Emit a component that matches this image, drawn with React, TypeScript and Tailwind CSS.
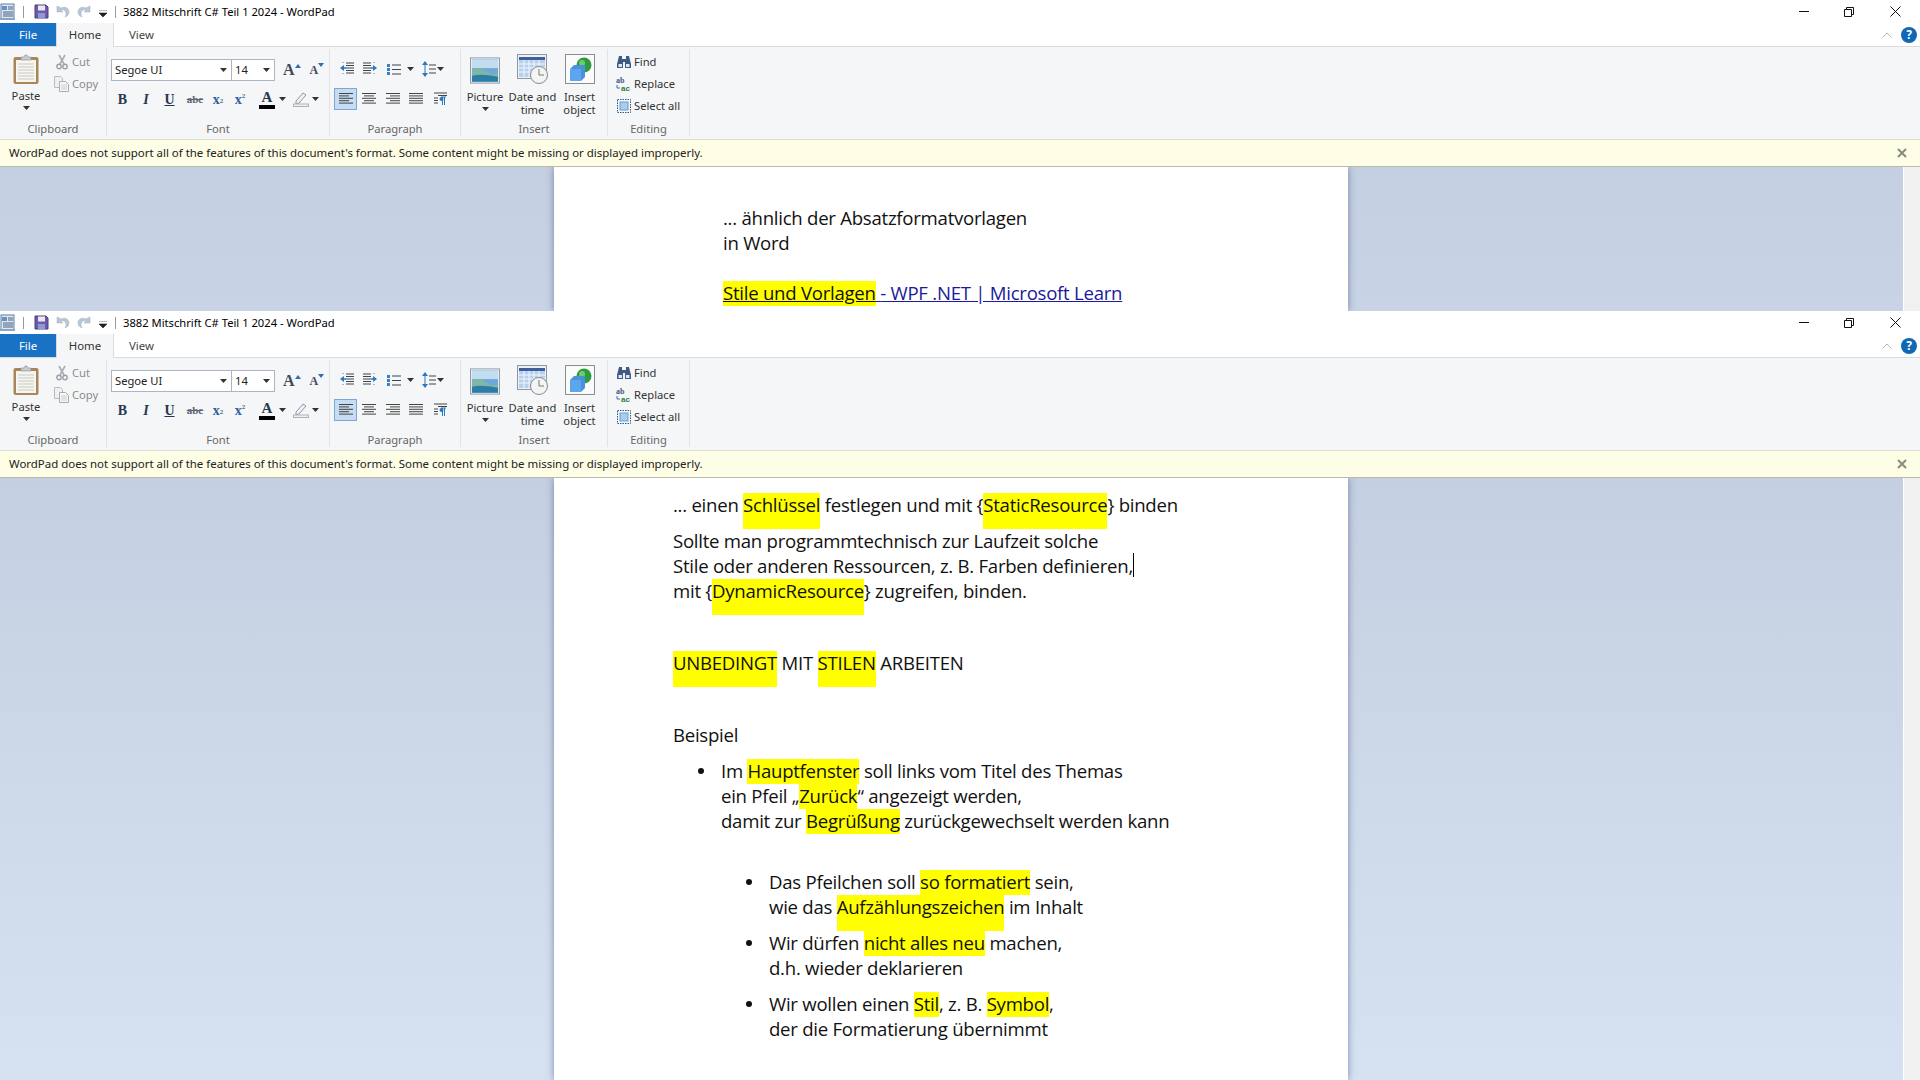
import type { ReactNode } from "react";

const ui = "font-['Noto_Sans','Open_Sans',sans-serif]";

function Arrow({ className = "" }: { className?: string }) {
  return (
    <svg width="7" height="4" viewBox="0 0 7 4" className={className}>
      <path d="M0 0h7L3.5 4z" fill="#333" />
    </svg>
  );
}

function Lines({ rows, color = "#444" }: { rows: [number, number][]; color?: string }) {
  return (
    <svg width="16" height="14" viewBox="0 0 16 14">
      {rows.map(([x, w], i) => (
        <rect key={i} x={x} y={1 + i * 2.4} width={w} height="1" fill={color} />
      ))}
    </svg>
  );
}

function AppIcon() {
  return (
    <svg width="16" height="18" viewBox="0 0 16 18">
      <rect x="1" y="1" width="13" height="15" fill="#dce8f5" stroke="#5f7f9f" />
      <rect x="2" y="3" width="5" height="4" fill="#6b8fc2" />
      <path d="M8 4h5M8 6h5M3 9h10M3 11h10M3 13h10" stroke="#47607c" />
      <rect x="0" y="15" width="15" height="2" fill="#8aa5c0" />
    </svg>
  );
}

function SaveIcon() {
  return (
    <svg width="15" height="15" viewBox="0 0 15 15">
      <path d="M1 1h11l2 2v11H1z" fill="#6e5aa8" stroke="#4a3d7c" />
      <rect x="4" y="1.5" width="7" height="5" fill="#e6e9f2" />
      <rect x="4" y="9" width="7" height="5" fill="#8b9ad0" />
    </svg>
  );
}

function UndoIcon({ flip }: { flip?: boolean }) {
  return (
    <svg width="14" height="14" viewBox="0 0 14 14" className={flip ? "-scale-x-100" : ""}>
      <path d="M1 1v6h6L5 5c3-1 5 1 5 4 0 1-.5 2-1 3 3-1 4-3 4-5 0-4-4-6-8-4z" fill="#b9c6d6" stroke="#a3b1c2" strokeWidth=".5" />
    </svg>
  );
}

function TitleBar({ title }: { title: string }) {
  return (
    <div className="flex h-[23px] items-center bg-white">
      <div className="flex w-[21px]">
        <AppIcon />
      </div>
      <div className="mx-0.5 h-[12px] w-px bg-[#999]" />
      <div className="ml-[8px] flex items-center gap-[7px]">
        <SaveIcon />
        <UndoIcon />
        <UndoIcon flip />
      </div>
      <svg width="8" height="7" viewBox="0 0 8 7" className="ml-[8px] mt-[3px]">
        <path d="M0 0h8M0 3h8L4 7z" fill="#222" stroke="#222" strokeWidth=".6" />
      </svg>
      <div className="ml-[8px] h-[12px] w-px bg-[#999]" />
      <span className={`ml-[7px] text-[11.2px] leading-none text-black ${ui}`}>{title}</span>
      <div className="ml-auto flex items-center">
        <svg width="10" height="2" viewBox="0 0 10 2" className="mr-[35px]">
          <rect width="10" height="1" fill="#111" />
        </svg>
        <svg width="10" height="10" viewBox="0 0 10 10" className="mr-[36px]">
          <path d="M.5 2.5h7v7h-7zM2.5 2.5v-2h7v7h-2" fill="none" stroke="#111" />
        </svg>
        <svg width="11" height="11" viewBox="0 0 11 11" className="mr-[19px]">
          <path d="M.5.5l10 10M10.5.5l-10 10" stroke="#111" />
        </svg>
      </div>
    </div>
  );
}

function TabBar() {
  return (
    <div className={`flex h-[24px] items-stretch border-b border-[#dadbdc] bg-white text-[11.4px] ${ui}`}>
      <div className="flex w-[56px] items-center justify-center bg-[#1a72c4] text-white">File</div>
      <div className="z-10 -mb-px flex w-[58px] items-center justify-center border-x border-[#dadbdc] bg-[#f5f6f7] text-[#333]">
        Home
      </div>
      <div className="ml-[15px] flex items-center text-[#444]">View</div>
      <div className="ml-auto flex items-center">
        <svg width="10" height="6" viewBox="0 0 10 6" className="mr-[9px]">
          <path d="M.5 5.5L5 1l4.5 4.5" fill="none" stroke="#b9b3ae" />
        </svg>
        <div className="mr-[3px] flex size-[16px] items-center justify-center rounded-full bg-[#0f67b5] text-[12px] leading-none font-bold text-white">
          ?
        </div>
      </div>
    </div>
  );
}

function Group({ label, width, children }: { label: string; width: string; children: ReactNode }) {
  return (
    <div className={`flex h-[87px] flex-col border-r border-[#e1e3e6] ${width}`}>
      <div className="min-h-0 flex-1">{children}</div>
      <div className="h-[14px] text-center text-[11.2px] leading-[13px] text-[#666]">{label}</div>
    </div>
  );
}

function SmallCommand({ icon, label, muted }: { icon: ReactNode; label: string; muted?: boolean }) {
  return (
    <div className={`flex h-[22px] items-center ${muted ? "text-[#8c8c8c]" : "text-[#333]"}`}>
      <span className="flex w-[19px] justify-center">{icon}</span>
      <span className="ml-[1px]">{label}</span>
    </div>
  );
}

function Clipboard() {
  return (
    <Group label="Clipboard" width="w-[107px]">
      <div className="flex">
        <div className="flex w-[52px] flex-col items-center pt-[5px]">
          <svg width="26" height="30" viewBox="0 0 26 30">
            <rect x=".5" y="3" width="25" height="27" rx="2" fill="#a9865a" />
            <rect x="3" y="6" width="20" height="22" fill="#f6f5ef" />
            <path d="M5 10h16M5 13h16M5 16h16M5 19h16M5 22h16M5 25h16" stroke="#c9c9c4" />
            <path d="M8 6V3h3l1-2h2l1 2h3v3z" fill="#c7c9cc" stroke="#8c8f93" strokeWidth=".6" />
          </svg>
          <span className="mt-[5px] leading-[14px] text-[#333]">Paste</span>
          <Arrow className="mt-[3px]" />
        </div>
        <div className="pt-[2px]">
          <SmallCommand
            muted
            label="Cut"
            icon={
              <svg width="12" height="16" viewBox="0 0 12 16">
                <path d="M3 1l5 9M9 1L4 10" stroke="#a9adb3" strokeWidth="1.6" />
                <circle cx="3" cy="12.5" r="2.2" fill="none" stroke="#9ba0a8" strokeWidth="1.4" />
                <circle cx="9" cy="12.5" r="2.2" fill="none" stroke="#9ba0a8" strokeWidth="1.4" />
              </svg>
            }
          />
          <SmallCommand
            muted
            label="Copy"
            icon={
              <svg width="15" height="16" viewBox="0 0 15 16">
                <path d="M.5.5h6l2 2v9H.5z" fill="#eef0f2" stroke="#b8bcc2" />
                <path d="M5.5 5.5h6l3 3v7h-9z" fill="#f8f8f8" stroke="#a8adb4" />
                <path d="M7 9h6M7 11h6M7 13h6" stroke="#c8ccd1" />
              </svg>
            }
          />
        </div>
      </div>
    </Group>
  );
}

function FormatButton({ children, className }: { children: ReactNode; className: string }) {
  return <span className={`flex h-[22px] items-center justify-center font-['Liberation_Serif',serif] ${className}`}>{children}</span>;
}

function Font() {
  return (
    <Group label="Font" width="w-[223px]">
      <div className="pt-[10px] pl-[4px]">
        <div className="flex h-[22px] items-center">
          <div className="flex h-full w-[121px] items-center justify-between border border-[#abb5c3] bg-white pr-[4px] pl-[3px] text-[#222]">
            Segoe UI
            <Arrow />
          </div>
          <div className="-ml-px flex h-full w-[44px] items-center justify-between border border-[#abb5c3] bg-white pr-[4px] pl-[3px] text-[#222]">
            14
            <Arrow />
          </div>
          <span className="ml-[8px] font-['Liberation_Serif',serif] text-[16px] leading-none font-bold text-[#3d4a5c]">A</span>
          <svg width="6" height="4" viewBox="0 0 6 4" className="mb-[9px]">
            <path d="M0 4h6L3 0z" fill="#2d6fb0" />
          </svg>
          <span className="ml-[9px] font-['Liberation_Serif',serif] text-[12px] leading-none font-bold text-[#3d4a5c]">A</span>
          <svg width="6" height="4" viewBox="0 0 6 4" className="mb-[11px]">
            <path d="M0 0h6L3 4z" fill="#2d6fb0" />
          </svg>
        </div>
        <div className="mt-[7px] flex h-[22px] items-center">
          <FormatButton className="ml-[6px] w-[11px] text-[14px] font-bold text-[#27384e]">B</FormatButton>
          <FormatButton className="ml-[13px] w-[10px] text-[14px] font-bold text-[#27384e] italic">I</FormatButton>
          <FormatButton className="ml-[13px] w-[11px] text-[14px] font-bold text-[#27384e] underline">U</FormatButton>
          <FormatButton className="ml-[11px] w-[18px] text-[11px] font-bold text-[#5b6675] line-through">abc</FormatButton>
          <FormatButton className="ml-[7px] w-[14px] text-[14px] font-bold text-[#2e5f9e]">
            x<sub className="text-[7px] text-[#666]">2</sub>
          </FormatButton>
          <FormatButton className="ml-[8px] w-[14px] text-[14px] font-bold text-[#2e5f9e]">
            x<sup className="text-[7px] text-[#666]">2</sup>
          </FormatButton>
          <div className="ml-[12px] flex w-[16px] flex-col items-center">
            <span className="font-['Liberation_Serif',serif] text-[15px] leading-[14px] font-bold text-[#27384e]">A</span>
            <div className="mt-[1px] h-[4px] w-[16px] bg-black" />
          </div>
          <Arrow className="ml-[4px]" />
          <svg width="16" height="16" viewBox="0 0 16 16" className="ml-[7px]">
            <path d="M3 10l7-8 3 2-7 8-3 1z" fill="#eef2f6" stroke="#8d98a6" />
            <rect x=".5" y="13" width="15" height="2.5" fill="#eef0f0" stroke="#adb3b8" />
          </svg>
          <Arrow className="ml-[3px]" />
        </div>
      </div>
    </Group>
  );
}

function IndentIcon({ flip }: { flip?: boolean }) {
  return (
    <svg width="16" height="14" viewBox="0 0 16 14" className={flip ? "-scale-x-100" : ""}>
      <path d="M7 1h8M7 3.5h8M7 6h8M7 8.5h8M7 11h8" stroke="#3c4550" />
      <path d="M1 6l4-3v6z" fill="#2a77c0" />
      <path d="M4 6h3" stroke="#2a77c0" strokeWidth="1.5" />
      <path d="M4 0v1M4 11v1" stroke="#777" strokeDasharray="1 1" />
    </svg>
  );
}

function Paragraph() {
  return (
    <Group label="Paragraph" width="w-[131px]">
      <div className="flex h-[40px] items-center pl-[9px]">
        <IndentIcon />
        <span className="ml-[7px]">
          <IndentIcon flip />
        </span>
        <svg width="16" height="13" viewBox="0 0 16 13" className="ml-[8px]">
          <path d="M6 2h9M6 6.5h9M6 11h9" stroke="#3c4550" />
          <rect x="1" y="1" width="3" height="3" fill="#3a80c4" />
          <rect x="1" y="5" width="3" height="3" fill="#3a80c4" />
          <rect x="1" y="9" width="3" height="3" fill="#3a80c4" />
        </svg>
        <Arrow className="ml-[5px]" />
        <svg width="14" height="16" viewBox="0 0 14 16" className="ml-[8px]">
          <path d="M3 0l3 4H0zM3 16l3-4H0z" fill="#2a77c0" />
          <path d="M3 4v8" stroke="#2a77c0" />
          <path d="M7 4h7M7 8h7M7 12h7" stroke="#3c4550" />
        </svg>
        <Arrow className="ml-[1px]" />
      </div>
      <div className="-mt-px flex items-center pl-[4px]">
        <span className="flex h-[22px] w-[23px] items-center justify-center border border-[#7da7d6] bg-[#c5dcf3]">
          <Lines rows={[[1, 14], [1, 10], [1, 14], [1, 10], [1, 14]]} />
        </span>
        <span className="ml-[4px]">
          <Lines rows={[[1, 14], [3, 10], [1, 14], [3, 10], [1, 14]]} />
        </span>
        <span className="ml-[8px]">
          <Lines rows={[[1, 14], [5, 10], [1, 14], [5, 10], [1, 14]]} />
        </span>
        <span className="ml-[7px]">
          <Lines rows={[[1, 14], [1, 14], [1, 14], [1, 14], [1, 14]]} />
        </span>
        <span className="ml-[9px] flex">
          <svg width="14" height="14" viewBox="0 0 14 14">
            <path d="M1 1h13M5 3.5h9M1 6h4M1 8.5h4M1 11h4" stroke="#444" />
            <path d="M8 5h5M9.5 5v8M11.5 5v8" stroke="#2a77c0" />
            <circle cx="8.5" cy="7" r="2" fill="#2a77c0" />
          </svg>
        </span>
      </div>
    </Group>
  );
}

function PictureIcon() {
  return (
    <svg width="30" height="27" viewBox="0 0 31 27">
      <rect x=".5" y=".5" width="30" height="26" fill="#f4f5f6" stroke="#8e98a3" />
      <rect x="2" y="2" width="27" height="23" fill="#6fa8d6" />
      <rect x="2" y="2" width="27" height="9" fill="#c3ddf0" />
      <path d="M2 13c6-4 11-2 16 2s8 2 11 1v5H2z" fill="#7fb6a7" />
      <path d="M2 19c8-2 16-1 27 1v5H2z" fill="#2b7fa6" />
    </svg>
  );
}

function CalendarIcon() {
  return (
    <svg width="32" height="31" viewBox="0 0 32 31">
      <rect x=".5" y=".5" width="29" height="24" fill="#eef1f4" stroke="#8e98a3" />
      <rect x="2" y="3" width="26" height="3" fill="#3e5f99" />
      <rect x="2" y="6" width="26" height="17" fill="#b7d0ee" />
      <path d="M2 10h26M2 14h26M2 18h26M7 6v17M12 6v17M17 6v17M22 6v17" stroke="#f3f7fb" />
      <circle cx="22" cy="21" r="8.5" fill="#f3f4f4" stroke="#868b91" />
      <path d="M22 15v6h5" fill="none" stroke="#777" />
    </svg>
  );
}

function ObjectIcon() {
  return (
    <svg width="30" height="30" viewBox="0 0 30 30">
      <rect x=".5" y=".5" width="29" height="29" fill="#fbfbfb" stroke="#8d8d8d" />
      <circle cx="19" cy="11" r="7.5" fill="#2e9b3e" />
      <circle cx="17" cy="9" r="3" fill="#6fcb72" />
      <path d="M5 15l4-4h11v12l-4 4H5z" fill="#4a90dc" />
      <path d="M5 15h11v12H5z" fill="#5ba6ec" />
    </svg>
  );
}

function Insert() {
  return (
    <Group label="Insert" width="w-[147px]">
      <div className="flex pt-[5px] leading-[13px] text-[#333]">
        <div className="flex w-[48px] flex-col items-center">
          <div className="flex h-[30px] items-end">
            <PictureIcon />
          </div>
          <span className="mt-[6px]">Picture</span>
          <Arrow className="mt-[4px]" />
        </div>
        <div className="flex w-[47px] flex-col items-center text-center">
          <div className="flex h-[30px] items-center">
            <CalendarIcon />
          </div>
          <span className="mt-[6px] whitespace-nowrap">
            Date and
            <br />
            time
          </span>
        </div>
        <div className="flex w-[47px] flex-col items-center text-center">
          <ObjectIcon />
          <span className="mt-[6px]">
            Insert
            <br />
            object
          </span>
        </div>
      </div>
    </Group>
  );
}

function Editing() {
  return (
    <Group label="Editing" width="w-[82px]">
      <div className="pt-[2px] pl-[6px]">
        <SmallCommand
          label="Find"
          icon={
            <svg width="16" height="14" viewBox="0 0 16 14">
              <path d="M3 1h3v3h4V1h3l2 8v4H9V7H7v6H1V9z" fill="#3f5a83" />
              <rect x="2.5" y="9" width="3.5" height="3" fill="#dfe7f2" />
              <rect x="10" y="9" width="3.5" height="3" fill="#dfe7f2" />
            </svg>
          }
        />
        <SmallCommand
          label="Replace"
          icon={
            <svg width="17" height="16" viewBox="0 0 17 16">
              <text x="1" y="7" fontSize="8" fontWeight="700" fill="#3f5a83" fontFamily="Liberation Serif">ab</text>
              <text x="6" y="15" fontSize="8" fontWeight="700" fill="#2f7d3c" fontFamily="Liberation Sans">ac</text>
              <path d="M2 9v3h3" fill="none" stroke="#2a77c0" />
            </svg>
          }
        />
        <SmallCommand
          label="Select all"
          icon={
            <svg width="14" height="14" viewBox="0 0 14 14">
              <rect x=".5" y=".5" width="13" height="13" fill="none" stroke="#2f5f86" strokeDasharray="1.5 1" />
              <rect x="3" y="3" width="8" height="8" fill="#a9cdf0" stroke="#6c9ed0" />
            </svg>
          }
        />
      </div>
    </Group>
  );
}

function Ribbon() {
  return (
    <div className={`flex h-[92px] items-start bg-[#f5f6f7] pt-[2px] text-[11.2px] ${ui}`}>
      <Clipboard />
      <Font />
      <Paragraph />
      <Insert />
      <Editing />
    </div>
  );
}

function InfoBar() {
  return (
    <div className={`relative z-10 flex h-[28px] items-center justify-between border-y border-t-[#dcdcd4] border-b-[#b9b9ac] bg-[#fefde5] pr-[13px] pl-[9px] text-[11.45px] text-[#222] ${ui}`}>
      <span>WordPad does not support all of the features of this document's format. Some content might be missing or displayed improperly.</span>
      <svg width="10" height="10" viewBox="0 0 10 10">
        <path d="M1 1l8 8M9 1L1 9" stroke="#8a8a80" strokeWidth="2" />
      </svg>
    </div>
  );
}

function Hl({ children, tall }: { children: ReactNode; tall?: boolean }) {
  return <span className={`inline-block bg-[#ffff00] align-top ${tall ? "h-[36px]" : "h-[25px]"}`}>{children}</span>;
}

function Line({ children, className = "" }: { children?: ReactNode; className?: string }) {
  return <div className={`h-[25px] whitespace-nowrap ${className}`}>{children}</div>;
}

function Bullet({ children, className = "" }: { children: ReactNode; className?: string }) {
  return (
    <div className={`flex ${className}`}>
      <span className="mt-[9px] mr-[17px] size-[6px] shrink-0 rounded-[50%] bg-[#111]" />
      <div>{children}</div>
    </div>
  );
}

function Window({ className, backdrop, pageClass, children }: { className: string; backdrop: string; pageClass: string; children: ReactNode }) {
  return (
    <div className={`flex flex-col overflow-hidden bg-white ${className}`}>
      <TitleBar title="3882 Mitschrift C# Teil 1 2024 - WordPad" />
      <TabBar />
      <Ribbon />
      <InfoBar />
      <div className={`flex min-h-0 flex-1 bg-gradient-to-b ${backdrop}`}>
        <div className="flex flex-1 justify-center pr-[1px]">
          <div className={`w-[794px] bg-white text-[18.6px] leading-[23px] tracking-[-0.26px] text-[#111] shadow-[0_0_7px_rgba(60,80,120,0.6)] font-['Open_Sans',sans-serif] ${pageClass}`}>
            {children}
          </div>
        </div>
        <div className="w-[17px] border-l border-[#fff] bg-[#f0f0f0]" />
      </div>
    </div>
  );
}

export default function App() {
  return (
    <div className="flex h-screen w-full flex-col overflow-hidden bg-white">
      <Window className="h-[311px] shrink-0" backdrop="from-[#c4cfe1] to-[#c8d3e5]" pageClass="pt-[39px] pl-[169px]">
        <Line>... ähnlich der Absatzformatvorlagen</Line>
        <Line>in Word</Line>
        <Line />
        <Line className="text-[#1a1a9c] underline">
          <Hl>
            <span className="text-[#111] underline">Stile und Vorlagen</span>
          </Hl>{" "}
          - WPF .NET | Microsoft Learn
        </Line>
      </Window>
      <Window className="min-h-0 flex-1" backdrop="from-[#c4cfe1] to-[#d6e2f1]" pageClass="pt-[15px] pl-[119px]">
        <Line className="mb-[11px]">
          ... einen <Hl tall>Schlüssel</Hl> festlegen und mit {"{"}
          <Hl tall>StaticResource</Hl>
          {"}"} binden
        </Line>
        <Line>Sollte man programmtechnisch zur Laufzeit solche</Line>
        <Line>
          <span className="relative">
            Stile oder anderen Ressourcen, z. B. Farben definieren,
            <span className="absolute top-0 -right-[1px] h-[24px] w-px bg-black" />
          </span>
        </Line>
        <Line className="mb-[47px]">
          mit {"{"}
          <Hl tall>DynamicResource</Hl>
          {"}"} zugreifen, binden.
        </Line>
        <Line className="mb-[47px]">
          <Hl tall>UNBEDINGT</Hl> MIT <Hl tall>STILEN</Hl> ARBEITEN
        </Line>
        <Line className="mb-[11px]">Beispiel</Line>
        <Bullet className="ml-[25px]">
          <Line>
            Im <Hl>Hauptfenster</Hl> soll links vom Titel des Themas
          </Line>
          <Line>
            ein Pfeil „<Hl>Zurück</Hl>“ angezeigt werden,
          </Line>
          <Line>
            damit zur <Hl>Begrüßung</Hl> zurückgewechselt werden kann
          </Line>
        </Bullet>
        <div className="mt-[36px] ml-[73px]">
          <Bullet className="mb-[11px]">
            <Line>
              Das Pfeilchen soll <Hl>so formatiert</Hl> sein,
            </Line>
            <Line>
              wie das <Hl tall>Aufzählungszeichen</Hl> im Inhalt
            </Line>
          </Bullet>
          <Bullet className="mb-[11px]">
            <Line>
              Wir dürfen <Hl>nicht alles neu</Hl> machen,
            </Line>
            <Line>d.h. wieder deklarieren</Line>
          </Bullet>
          <Bullet>
            <Line>
              Wir wollen einen <Hl>Stil</Hl>, z. B. <Hl>Symbol</Hl>,
            </Line>
            <Line>der die Formatierung übernimmt</Line>
          </Bullet>
        </div>
      </Window>
    </div>
  );
}
